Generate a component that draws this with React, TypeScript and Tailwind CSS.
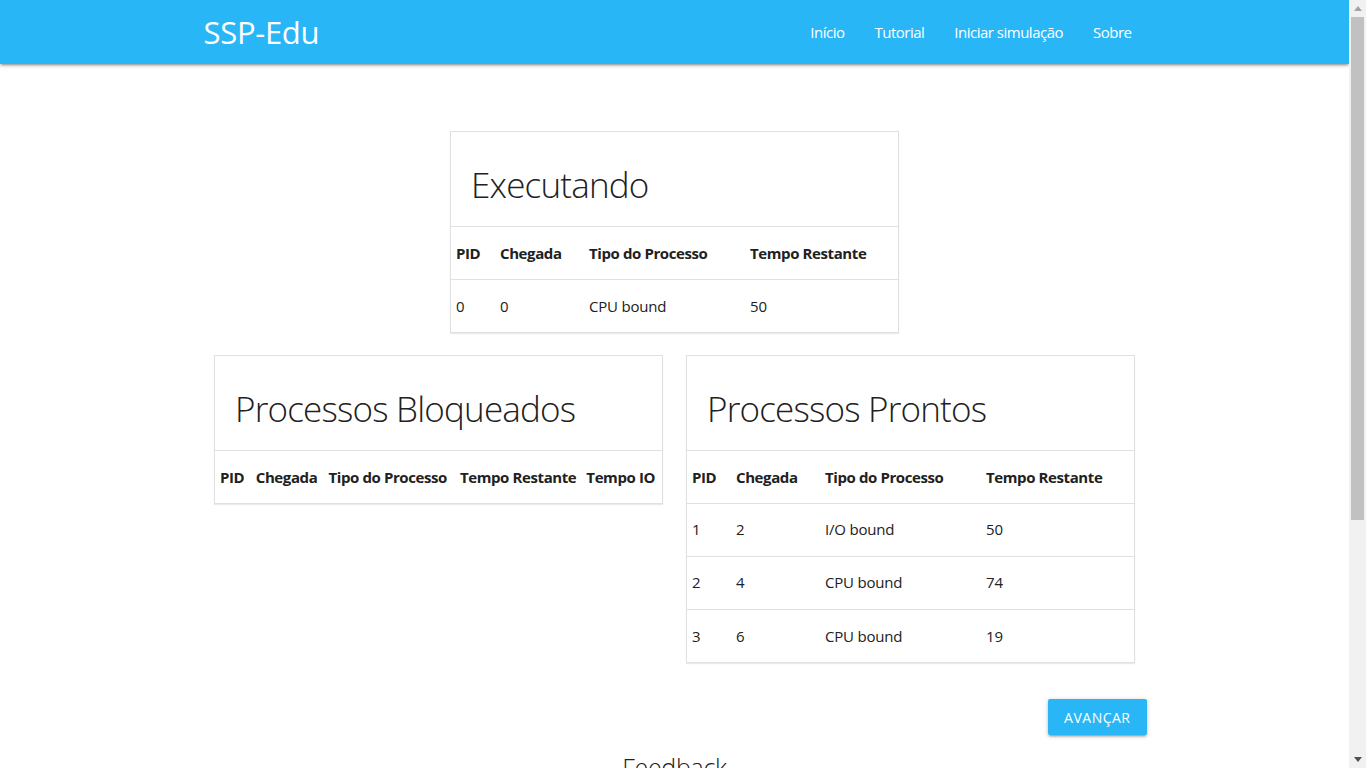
// ---------------------------------------------------------------------------
// Data
// ---------------------------------------------------------------------------

type Proc = { pid: number; chegada: number; tipo: string; restante: number; io?: number }

const executando: Proc[] = [{ pid: 0, chegada: 0, tipo: 'CPU bound', restante: 50 }]
const bloqueados: Proc[] = []
const prontos: Proc[] = [
  { pid: 1, chegada: 2, tipo: 'I/O bound', restante: 50 },
  { pid: 2, chegada: 4, tipo: 'CPU bound', restante: 74 },
  { pid: 3, chegada: 6, tipo: 'CPU bound', restante: 19 },
]

const FONT = "font-['Open_Sans','Noto_Sans',sans-serif]"

// ---------------------------------------------------------------------------
// Card with table
// ---------------------------------------------------------------------------

interface CardProps {
  title: string
  cols: { label: string; w: string }[]
  rows: Proc[]
  withIo?: boolean
}

function ProcCard({ title, cols, rows, withIo }: CardProps) {
  return (
    <div className="w-[449px] bg-white border border-[#e0e0e0] shadow-[0_1px_1px_rgba(0,0,0,0.08)]">
      <div className="h-[95px] border-b border-[#e0e0e0] flex items-center pl-[20px] pt-[12px]">
        <h3 className="text-[35px] font-light text-[#212121] tracking-[-0.8px]">{title}</h3>
      </div>
      <table className="w-full text-[15px] text-[#212121] border-collapse">
        <thead>
          <tr className="h-[52px]">
            {cols.map(c => (
              <th key={c.label} className={`${c.w} px-[5px] text-left font-bold whitespace-nowrap tracking-[-0.4px]`}>{c.label}</th>
            ))}
          </tr>
        </thead>
        <tbody>
          {rows.map(r => (
            <tr key={r.pid} className="h-[53px] border-t border-[#e0e0e0]">
              <td className="px-[5px]">{r.pid}</td>
              <td className="px-[5px]">{r.chegada}</td>
              <td className="px-[5px] tracking-[-0.2px]">{r.tipo}</td>
              <td className="px-[5px]">{r.restante}</td>
              {withIo && <td className="px-[5px]">{r.io}</td>}
            </tr>
          ))}
        </tbody>
      </table>
    </div>
  )
}

const fourCols = [
  { label: 'PID', w: 'w-[44px]' },
  { label: 'Chegada', w: 'w-[89px]' },
  { label: 'Tipo do Processo', w: 'w-[161px]' },
  { label: 'Tempo Restante', w: 'w-[153px]' },
]

const fiveCols = [
  { label: 'PID', w: 'w-[36px]' },
  { label: 'Chegada', w: 'w-[73px]' },
  { label: 'Tipo do Processo', w: 'w-[132px]' },
  { label: 'Tempo Restante', w: 'w-[125px]' },
  { label: 'Tempo IO', w: 'w-[81px]' },
]

// ---------------------------------------------------------------------------
// Page
// ---------------------------------------------------------------------------

export default function App() {
  return (
    <div className={`h-screen w-full flex overflow-hidden bg-white ${FONT}`}>
      <div className="flex-1 flex flex-col overflow-hidden">
        <nav className="h-[64px] shrink-0 bg-[#29b6f6] shadow-[0_2px_2px_0_rgba(0,0,0,0.14),0_3px_1px_-2px_rgba(0,0,0,0.12),0_1px_5px_0_rgba(0,0,0,0.2)] relative z-10">
          <div className="w-[944px] mx-auto h-full flex items-center justify-between">
            <a className="text-[31px] text-white tracking-[-0.3px] pl-[1px]">SSP-Edu</a>
            <ul className="flex items-center text-[15px] text-white tracking-[-0.5px]">
              <li className="px-[15px]">Início</li>
              <li className="px-[15px]">Tutorial</li>
              <li className="px-[15px]">Iniciar simulação</li>
              <li className="px-[15px]">Sobre</li>
            </ul>
          </div>
        </nav>

        <main className="w-[944px] mx-auto pt-[67px]">
          <div className="flex justify-center">
            <ProcCard title="Executando" cols={fourCols} rows={executando} />
          </div>

          <div className="flex justify-center items-start gap-[23px] mt-[22px]">
            <ProcCard title="Processos Bloqueados" cols={fiveCols} rows={bloqueados} withIo />
            <ProcCard title="Processos Prontos" cols={fourCols} rows={prontos} />
          </div>

          <div className="flex justify-end mt-[36px]">
            <button className="h-[36px] px-[16px] rounded-[2px] bg-[#29b6f6] text-white text-[14px] uppercase tracking-[0.5px] shadow-[0_2px_2px_0_rgba(0,0,0,0.14),0_3px_1px_-2px_rgba(0,0,0,0.12),0_1px_5px_0_rgba(0,0,0,0.2)]">
              Avançar
            </button>
          </div>

          <h4 className="text-center text-[25px] font-light text-[#212121] mt-[14px] tracking-[-0.3px]">Feedback</h4>
        </main>
      </div>

      {/* scrollbar */}
      <div className="w-[17px] shrink-0 bg-[#f1f1f1] flex flex-col items-center">
        <div className="h-[17px] flex items-center justify-center">
          <svg width="8" height="5" viewBox="0 0 8 5"><path d="M4 0L8 5H0z" fill="#a3a3a3" /></svg>
        </div>
        <div className="w-[13px] h-[503px] bg-[#c1c1c1]" />
        <div className="flex-1" />
        <div className="h-[17px] flex items-center justify-center">
          <svg width="8" height="5" viewBox="0 0 8 5"><path d="M0 0H8L4 5z" fill="#505050" /></svg>
        </div>
      </div>
    </div>
  )
}
